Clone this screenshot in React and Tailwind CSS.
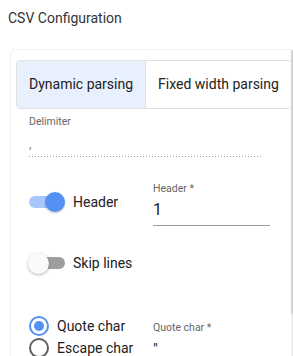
export default function App() {
  return (
    <div className="flex w-[293px] h-[356px] overflow-hidden bg-white font-['Roboto',sans-serif] text-[#212121]">
      <div className="w-[291px] h-[356px] overflow-hidden shrink-0">
        <div className="pl-2 pt-[9px] text-[14px] leading-[18px] text-[#333]">CSV Configuration</div>
        <div className="ml-[10px] mt-[22px] w-[300px] h-[400px] border border-[#f0f0f0] rounded-md pl-[5px] pt-[10px]">
          <div className="inline-flex border border-[#e0e0e0] rounded-[4px] overflow-hidden h-[49px]">
            <div className="flex items-center px-3 bg-[#e8f0fe] text-[14px] text-[#212121]">Dynamic parsing</div>
            <div className="flex items-center pl-3 pr-3 border-l border-[#e0e0e0] text-[14px] text-[#212121] bg-white">Fixed width parsing</div>
          </div>
          <div className="pl-[13px]">
            <div className="mt-[7px] text-[10.5px] leading-[12px] text-[#666]">Delimiter</div>
            <div className="w-[233px] h-[28px] pt-[8px] text-[13px] leading-[16px] text-[#888]">,</div>
            <div className="w-[233px] h-px bg-[linear-gradient(to_right,#9a9a9a_34%,transparent_34%)] bg-[length:3px_1px] bg-repeat-x"></div>

            <div className="flex mt-[26px]">
              <div className="w-[124px] shrink-0 mt-[9px] h-[20px] flex items-center gap-2">
                <div className="relative w-[36px] h-[20px]">
                  <div className="absolute left-0 top-[4px] w-[34px] h-[12px] rounded-full bg-[#a8c7fa]"></div>
                  <div className="absolute right-0 top-0 w-[20px] h-[20px] rounded-full bg-[#5591f5] shadow-[0_1px_2px_rgba(0,0,0,0.25)]"></div>
                </div>
                <span className="text-[14px] leading-[20px]">Header</span>
              </div>
              <div className="w-[117px]">
                <div className="text-[10.5px] leading-[12px] text-[#666]">Header *</div>
                <div className="h-[31px] pt-[5px] border-b border-[#9e9e9e] text-[16px] leading-[20px]">1</div>
              </div>
            </div>

            <div className="mt-[27px] h-[20px] flex items-center gap-2">
              <div className="relative w-[36px] h-[20px]">
                <div className="absolute right-0 top-[4px] w-[30px] h-[12px] rounded-full bg-[#9e9e9e]"></div>
                <div className="absolute left-[-1px] top-0 w-[21px] h-[21px] rounded-full bg-[#fafafa] shadow-[0_1px_3px_rgba(0,0,0,0.3)]"></div>
              </div>
              <span className="text-[14px] leading-[20px]">Skip lines</span>
            </div>

            <div className="flex mt-[42px]">
              <div className="w-[124px] shrink-0">
                <div className="h-[22px] flex items-center gap-2">
                  <div className="w-[20px] h-[20px] rounded-full border-2 border-[#5591f5] flex items-center justify-center">
                    <div className="w-[10px] h-[10px] rounded-full bg-[#5591f5]"></div>
                  </div>
                  <span className="text-[14px] leading-[20px]">Quote char</span>
                </div>
                <div className="h-[22px] flex items-center gap-2">
                  <div className="w-[20px] h-[20px] rounded-full border-2 border-[#5f5f5f]"></div>
                  <span className="text-[14px] leading-[20px]">Escape char</span>
                </div>
              </div>
              <div className="w-[117px]">
                <div className="mt-[7px] text-[10.5px] leading-[12px] text-[#666]">Quote char *</div>
                <div className="mt-[5px] text-[15px] leading-[20px]">"</div>
              </div>
            </div>
          </div>
        </div>
      </div>
      <div className="w-[2px] pt-[50px] flex flex-col">
        <div className="h-[264px] bg-[#d4d4d4]"></div>
        <div className="flex-1 bg-[#ececec]"></div>
      </div>
    </div>
  );
}
